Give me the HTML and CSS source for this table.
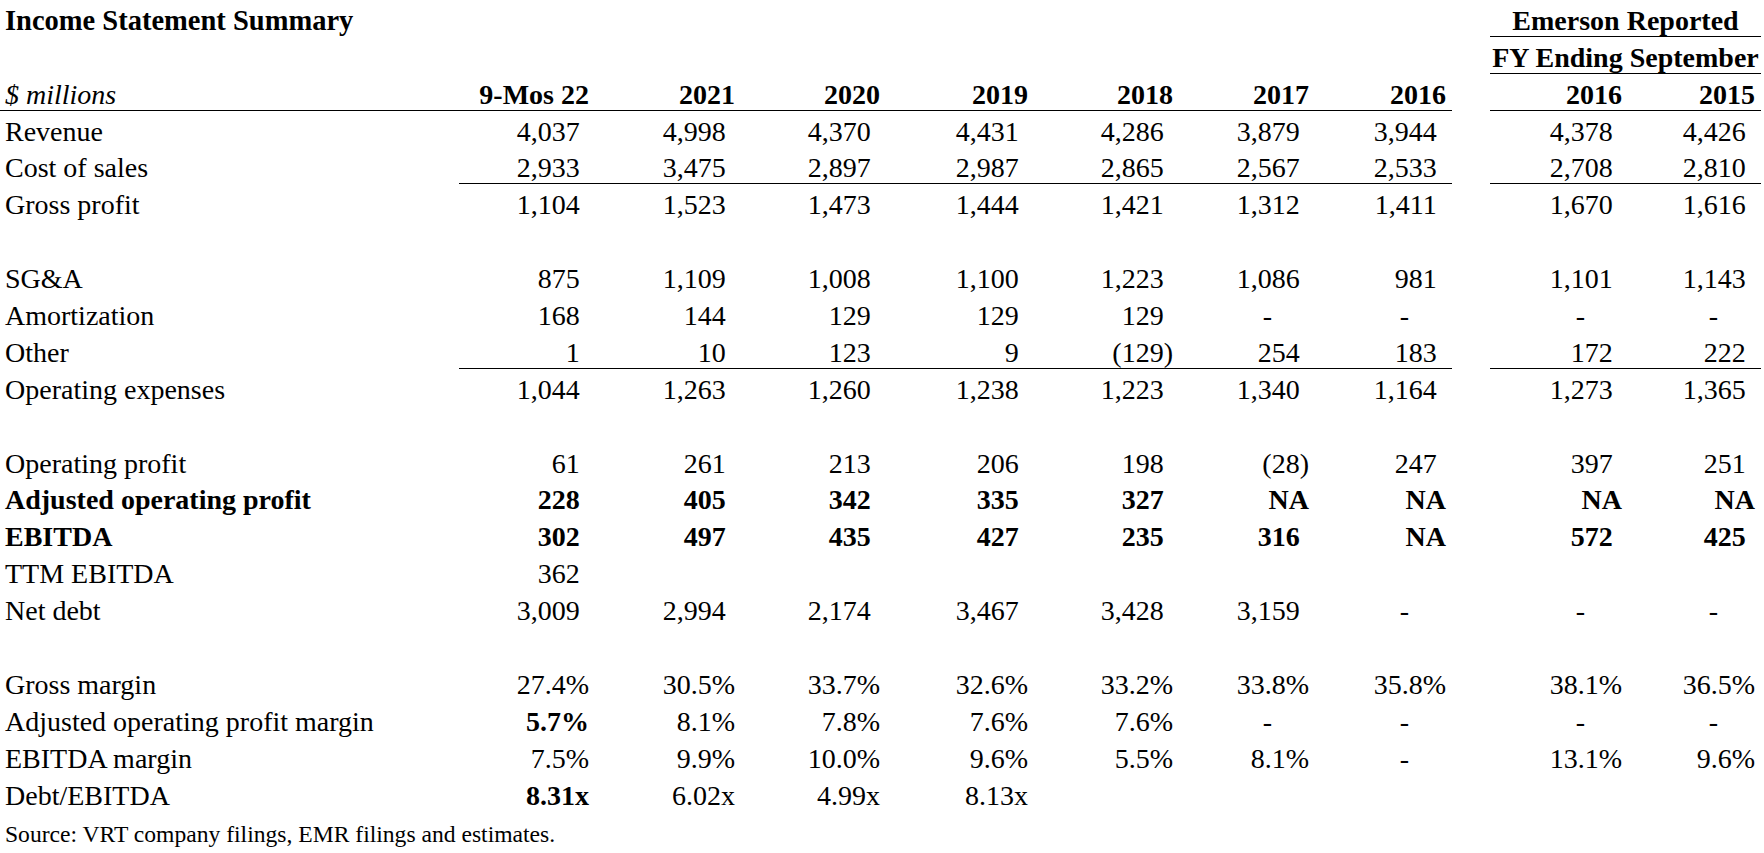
FILE: index.html
```html
<!DOCTYPE html>
<html lang="en">
<head>
<meta charset="utf-8">
<title>Income Statement Summary</title>
<link rel="stylesheet" href="styles.css">
</head>
<body>
<table class="sheet">
  <colgroup>
    <col class="c-label">
    <col class="c-9m">
    <col class="c-21">
    <col class="c-20">
    <col class="c-19">
    <col class="c-18">
    <col class="c-17">
    <col class="c-16">
    <col class="c-gap">
    <col class="c-e16">
    <col class="c-e15">
  </colgroup>
  <tbody>
    <tr>
      <td class="lbl title">Income Statement Summary</td>
      <td></td><td></td><td></td><td></td><td></td><td></td><td></td><td class="gap"></td>
      <td class="grp" colspan="2">Emerson Reported</td>
    </tr>
    <tr>
      <td class="lbl"></td>
      <td></td><td></td><td></td><td></td><td></td><td></td><td></td><td class="gap"></td>
      <td class="grp" colspan="2">FY Ending September</td>
    </tr>
    <tr class="head">
      <td class="lbl unit">$ millions</td>
      <td>9-Mos 22</td><td>2021</td><td>2020</td><td>2019</td><td>2018</td><td>2017</td><td>2016</td><td class="gap"></td>
      <td>2016</td><td>2015</td>
    </tr>
    <tr>
      <td class="lbl">Revenue</td>
      <td class="n">4,037</td><td class="n">4,998</td><td class="n">4,370</td><td class="n">4,431</td><td class="n">4,286</td><td class="n">3,879</td><td class="n">3,944</td><td class="gap"></td>
      <td class="n">4,378</td><td class="n">4,426</td>
    </tr>
    <tr class="rule">
      <td class="lbl">Cost of sales</td>
      <td class="n">2,933</td><td class="n">3,475</td><td class="n">2,897</td><td class="n">2,987</td><td class="n">2,865</td><td class="n">2,567</td><td class="n">2,533</td><td class="gap"></td>
      <td class="n">2,708</td><td class="n">2,810</td>
    </tr>
    <tr>
      <td class="lbl">Gross profit</td>
      <td class="n">1,104</td><td class="n">1,523</td><td class="n">1,473</td><td class="n">1,444</td><td class="n">1,421</td><td class="n">1,312</td><td class="n">1,411</td><td class="gap"></td>
      <td class="n">1,670</td><td class="n">1,616</td>
    </tr>
    <tr>
      <td class="lbl"></td>
      <td></td><td></td><td></td><td></td><td></td><td></td><td></td><td class="gap"></td><td></td><td></td>
    </tr>
    <tr>
      <td class="lbl">SG&amp;A</td>
      <td class="n">875</td><td class="n">1,109</td><td class="n">1,008</td><td class="n">1,100</td><td class="n">1,223</td><td class="n">1,086</td><td class="n">981</td><td class="gap"></td>
      <td class="n">1,101</td><td class="n">1,143</td>
    </tr>
    <tr>
      <td class="lbl">Amortization</td>
      <td class="n">168</td><td class="n">144</td><td class="n">129</td><td class="n">129</td><td class="n">129</td><td class="d">-</td><td class="d">-</td><td class="gap"></td>
      <td class="d">-</td><td class="d">-</td>
    </tr>
    <tr class="rule">
      <td class="lbl">Other</td>
      <td class="n">1</td><td class="n">10</td><td class="n">123</td><td class="n">9</td><td>(129)</td><td class="n">254</td><td class="n">183</td><td class="gap"></td>
      <td class="n">172</td><td class="n">222</td>
    </tr>
    <tr>
      <td class="lbl">Operating expenses</td>
      <td class="n">1,044</td><td class="n">1,263</td><td class="n">1,260</td><td class="n">1,238</td><td class="n">1,223</td><td class="n">1,340</td><td class="n">1,164</td><td class="gap"></td>
      <td class="n">1,273</td><td class="n">1,365</td>
    </tr>
    <tr>
      <td class="lbl"></td>
      <td></td><td></td><td></td><td></td><td></td><td></td><td></td><td class="gap"></td><td></td><td></td>
    </tr>
    <tr>
      <td class="lbl">Operating profit</td>
      <td class="n">61</td><td class="n">261</td><td class="n">213</td><td class="n">206</td><td class="n">198</td><td>(28)</td><td class="n">247</td><td class="gap"></td>
      <td class="n">397</td><td class="n">251</td>
    </tr>
    <tr class="bold">
      <td class="lbl">Adjusted operating profit</td>
      <td class="n">228</td><td class="n">405</td><td class="n">342</td><td class="n">335</td><td class="n">327</td><td>NA</td><td>NA</td><td class="gap"></td>
      <td>NA</td><td>NA</td>
    </tr>
    <tr class="bold">
      <td class="lbl">EBITDA</td>
      <td class="n">302</td><td class="n">497</td><td class="n">435</td><td class="n">427</td><td class="n">235</td><td class="n">316</td><td>NA</td><td class="gap"></td>
      <td class="n">572</td><td class="n">425</td>
    </tr>
    <tr>
      <td class="lbl">TTM EBITDA</td>
      <td class="n">362</td><td></td><td></td><td></td><td></td><td></td><td></td><td class="gap"></td><td></td><td></td>
    </tr>
    <tr>
      <td class="lbl">Net debt</td>
      <td class="n">3,009</td><td class="n">2,994</td><td class="n">2,174</td><td class="n">3,467</td><td class="n">3,428</td><td class="n">3,159</td><td class="d">-</td><td class="gap"></td>
      <td class="d">-</td><td class="d">-</td>
    </tr>
    <tr>
      <td class="lbl"></td>
      <td></td><td></td><td></td><td></td><td></td><td></td><td></td><td class="gap"></td><td></td><td></td>
    </tr>
    <tr>
      <td class="lbl">Gross margin</td>
      <td>27.4%</td><td>30.5%</td><td>33.7%</td><td>32.6%</td><td>33.2%</td><td>33.8%</td><td>35.8%</td><td class="gap"></td>
      <td>38.1%</td><td>36.5%</td>
    </tr>
    <tr>
      <td class="lbl">Adjusted operating profit margin</td>
      <td class="b">5.7%</td><td>8.1%</td><td>7.8%</td><td>7.6%</td><td>7.6%</td><td class="d">-</td><td class="d">-</td><td class="gap"></td>
      <td class="d">-</td><td class="d">-</td>
    </tr>
    <tr>
      <td class="lbl">EBITDA margin</td>
      <td>7.5%</td><td>9.9%</td><td>10.0%</td><td>9.6%</td><td>5.5%</td><td>8.1%</td><td class="d">-</td><td class="gap"></td>
      <td>13.1%</td><td>9.6%</td>
    </tr>
    <tr>
      <td class="lbl">Debt/EBITDA</td>
      <td class="b">8.31x</td><td>6.02x</td><td>4.99x</td><td>8.13x</td><td></td><td></td><td></td><td class="gap"></td><td></td><td></td>
    </tr>
    <tr class="note">
      <td class="lbl src" colspan="11">Source: VRT company filings, EMR filings and estimates.</td>
    </tr>
  </tbody>
</table>
</body>
</html>
```

FILE: styles.css
```css
html, body {
  margin: 0;
  padding: 0;
  background: #ffffff;
}

body {
  font-family: "Liberation Serif", "Times New Roman", serif;
  font-size: 28px;
  color: #000000;
}

.sheet {
  border-collapse: separate;
  border-spacing: 0;
  table-layout: fixed;
  width: 1761px;
}

.c-label { width: 459px; }
.c-9m { width: 136px; }
.c-21 { width: 146px; }
.c-20 { width: 145px; }
.c-19 { width: 148px; }
.c-18 { width: 145px; }
.c-17 { width: 136px; }
.c-16 { width: 137px; }
.c-gap { width: 38px; }
.c-e16 { width: 138px; }
.c-e15 { width: 133px; }

.sheet td {
  box-sizing: border-box;
  height: 36.9px;
  padding: 0 6px 0 0;
  line-height: 30px;
  vertical-align: bottom;
  text-align: right;
  white-space: nowrap;
  border-bottom: 1px solid transparent;
}

.sheet td.lbl {
  text-align: left;
  padding: 0 0 0 5px;
}

.title {
  font-weight: bold;
  font-size: 28.5px;
}

.grp {
  font-weight: bold;
  text-align: center !important;
  padding: 0 !important;
  border-bottom-color: #000000 !important;
  overflow: visible;
}

.head td {
  font-weight: bold;
  border-bottom-color: #000000;
}

.head td.gap {
  border-bottom-color: transparent;
}

.unit {
  font-style: italic;
  font-weight: normal !important;
}

.rule td {
  border-bottom-color: #000000;
}

.rule td.lbl,
.rule td.gap {
  border-bottom-color: transparent;
}

.bold td {
  font-weight: bold;
}

.n {
  padding-right: 15.3px !important;
}

.d {
  padding-right: 43px !important;
}

.b {
  font-weight: bold;
}

.note td.src {
  font-size: 23.6px;
  line-height: 26px;
}
```
